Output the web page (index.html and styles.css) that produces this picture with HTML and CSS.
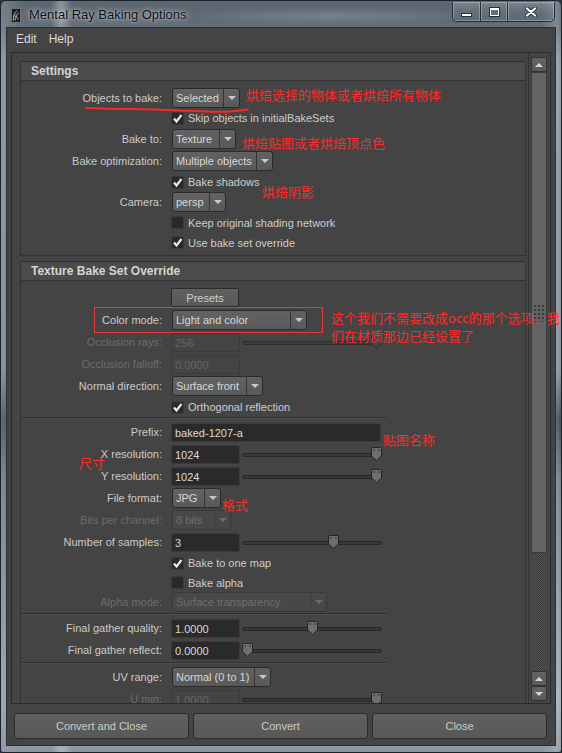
FILE: index.html
```html
<!DOCTYPE html>
<html>
<head>
<meta charset="utf-8">
<title>Mental Ray Baking Options</title>
<link rel="stylesheet" href="styles.css">
</head>
<body>
<div class="window">
  <div class="titlebar">
    <svg class="appicon" width="10" height="15" viewBox="0 0 10 15">
      <rect x="0.5" y="0.5" width="9" height="14" rx="1" fill="#1c1c1c" stroke="#6d747a"/>
      <path d="M2.5 12.5 C2 9 3 5 6 2.5 M4 12.5 C4.5 9 6 6.5 7.5 4.5 M3 8 C5 7.5 6.5 9 7 11.5" stroke="#d8d8d8" stroke-width="0.8" fill="none"/>
    </svg>
    <span class="title">Mental Ray Baking Options</span>
    <div class="caption-btns">
      <div class="cbtn cbtn-min"><span class="min-glyph"></span></div>
      <div class="cbtn cbtn-max"><span class="max-glyph"></span></div>
      <div class="cbtn cbtn-close">
        <svg width="12" height="10" viewBox="0 0 12 10">
          <path d="M2 1.5 L10 8.5 M10 1.5 L2 8.5" stroke="#2a3038" stroke-width="4" stroke-linecap="round"/>
          <path d="M2 1.5 L10 8.5 M10 1.5 L2 8.5" stroke="#ffffff" stroke-width="2.2" stroke-linecap="round"/>
        </svg>
      </div>
    </div>
  </div>

  <div class="client">
    <div class="menubar"><span>Edit</span><span>Help</span></div>

    <div class="scrollarea">
      <div class="viewport">
        <div class="section">
          <div class="sec-head">Settings</div>
          <div class="sec-body">
            <div class="row r20"><span class="lbl">Objects to bake:</span><div class="dd w68"><span class="dd-val">Selected</span><span class="dd-arr"></span></div></div>
            <div class="row r20"><span class="lbl"></span><span class="cb on"><svg viewBox="0 0 11 11"><polyline points="2,5.5 4.5,8.5 9.5,2" /></svg></span><span class="cb-text">Skip objects in initialBakeSets</span></div>
            <div class="row r22"><span class="lbl">Bake to:</span><div class="dd w64"><span class="dd-val">Texture</span><span class="dd-arr"></span></div></div>
            <div class="row r22"><span class="lbl">Bake optimization:</span><div class="dd w101"><span class="dd-val">Multiple objects</span><span class="dd-arr"></span></div></div>
            <div class="row r20"><span class="lbl"></span><span class="cb on"><svg viewBox="0 0 11 11"><polyline points="2,5.5 4.5,8.5 9.5,2" /></svg></span><span class="cb-text">Bake shadows</span></div>
            <div class="row r20"><span class="lbl">Camera:</span><div class="dd w54"><span class="dd-val">persp</span><span class="dd-arr"></span></div></div>
            <div class="row r21"><span class="lbl"></span><span class="cb"></span><span class="cb-text">Keep original shading network</span></div>
            <div class="row r19"><span class="lbl"></span><span class="cb on"><svg viewBox="0 0 11 11"><polyline points="2,5.5 4.5,8.5 9.5,2" /></svg></span><span class="cb-text">Use bake set override</span></div>
          </div>
        </div>

        <div class="section sec2">
          <div class="sec-head">Texture Bake Set Override</div>
          <div class="sec-body tight">
            <div class="row r23"><span class="lbl"></span><span class="btn presets">Presets</span></div>
            <div class="row"><span class="lbl">Color mode:</span><div class="dd w135"><span class="dd-val">Light and color</span><span class="dd-arr"></span></div></div>
            <div class="row"><span class="lbl dis">Occlusion rays:</span><span class="fld dis">256</span><div class="slider"><div class="track dis"></div><svg class="knob dis" style="left:129px" viewBox="0 0 11 14"><path d="M1.5 .5h8a1 1 0 0 1 1 1v7.5l-5 4.5-5-4.5v-7.5a1 1 0 0 1 1-1z"/></svg></div></div>
            <div class="row"><span class="lbl dis">Occlusion falloff:</span><span class="fld dis">0.0000</span></div>
            <div class="row"><span class="lbl">Normal direction:</span><div class="dd w91"><span class="dd-val">Surface front</span><span class="dd-arr"></span></div></div>
            <div class="row r20"><span class="lbl"></span><span class="cb on"><svg viewBox="0 0 11 11"><polyline points="2,5.5 4.5,8.5 9.5,2" /></svg></span><span class="cb-text">Orthogonal reflection</span></div>
            <div class="sep first"></div>
            <div class="row"><span class="lbl">Prefix:</span><span class="fld w210">baked-1207-a</span></div>
            <div class="row"><span class="lbl">X resolution:</span><span class="fld">1024</span><div class="slider"><div class="track"></div><svg class="knob" style="left:129px" viewBox="0 0 11 14"><path d="M1.5 .5h8a1 1 0 0 1 1 1v7.5l-5 4.5-5-4.5v-7.5a1 1 0 0 1 1-1z"/><rect class="notch" x="2.5" y="2" width="1" height="2"/><rect class="notch" x="7.5" y="2" width="1" height="2"/></svg></div></div>
            <div class="row"><span class="lbl">Y resolution:</span><span class="fld">1024</span><div class="slider"><div class="track"></div><svg class="knob" style="left:129px" viewBox="0 0 11 14"><path d="M1.5 .5h8a1 1 0 0 1 1 1v7.5l-5 4.5-5-4.5v-7.5a1 1 0 0 1 1-1z"/><rect class="notch" x="2.5" y="2" width="1" height="2"/><rect class="notch" x="7.5" y="2" width="1" height="2"/></svg></div></div>
            <div class="row"><span class="lbl">File format:</span><div class="dd w49"><span class="dd-val">JPG</span><span class="dd-arr"></span></div></div>
            <div class="row"><span class="lbl dis">Bits per channel:</span><div class="dd dis w59"><span class="dd-val">8 bits</span><span class="dd-arr"></span></div></div>
            <div class="row"><span class="lbl">Number of samples:</span><span class="fld">3</span><div class="slider"><div class="track"></div><svg class="knob" style="left:86px" viewBox="0 0 11 14"><path d="M1.5 .5h8a1 1 0 0 1 1 1v7.5l-5 4.5-5-4.5v-7.5a1 1 0 0 1 1-1z"/><rect class="notch" x="2.5" y="2" width="1" height="2"/><rect class="notch" x="7.5" y="2" width="1" height="2"/></svg></div></div>
            <div class="row r20"><span class="lbl"></span><span class="cb on"><svg viewBox="0 0 11 11"><polyline points="2,5.5 4.5,8.5 9.5,2" /></svg></span><span class="cb-text">Bake to one map</span></div>
            <div class="row r19"><span class="lbl"></span><span class="cb"></span><span class="cb-text">Bake alpha</span></div>
            <div class="row r20"><span class="lbl dis">Alpha mode:</span><div class="dd dis w155"><span class="dd-val">Surface transparency</span><span class="dd-arr"></span></div></div>
            <div class="sep"></div>
            <div class="row gap1"><span class="lbl">Final gather quality:</span><span class="fld">1.0000</span><div class="slider"><div class="track"></div><svg class="knob" style="left:65px" viewBox="0 0 11 14"><path d="M1.5 .5h8a1 1 0 0 1 1 1v7.5l-5 4.5-5-4.5v-7.5a1 1 0 0 1 1-1z"/><rect class="notch" x="2.5" y="2" width="1" height="2"/><rect class="notch" x="7.5" y="2" width="1" height="2"/></svg></div></div>
            <div class="row"><span class="lbl">Final gather reflect:</span><span class="fld">0.0000</span><div class="slider"><div class="track"></div><svg class="knob" style="left:0px" viewBox="0 0 11 14"><path d="M1.5 .5h8a1 1 0 0 1 1 1v7.5l-5 4.5-5-4.5v-7.5a1 1 0 0 1 1-1z"/><rect class="notch" x="2.5" y="2" width="1" height="2"/><rect class="notch" x="7.5" y="2" width="1" height="2"/></svg></div></div>
            <div class="sep"></div>
            <div class="row"><span class="lbl">UV range:</span><div class="dd w99"><span class="dd-val">Normal (0 to 1)</span><span class="dd-arr"></span></div></div>
            <div class="row"><span class="lbl dis">U min:</span><span class="fld dis">1.0000</span><div class="slider"><div class="track"></div><svg class="knob" style="left:129px" viewBox="0 0 11 14"><path d="M1.5 .5h8a1 1 0 0 1 1 1v7.5l-5 4.5-5-4.5v-7.5a1 1 0 0 1 1-1z"/><rect class="notch" x="2.5" y="2" width="1" height="2"/><rect class="notch" x="7.5" y="2" width="1" height="2"/></svg></div></div>
          </div>
        </div>
      </div>

      <div class="scrollbar">
        <div class="sb-btn up"></div>
        <div class="sb-thumb"><div class="sb-grip"></div></div>
        <div class="sb-track"></div>
        <div class="sb-btn up"></div>
        <div class="sb-btn down"></div>
      </div>
    </div>

    <div class="actions">
      <div class="btn action">Convert and Close</div>
      <div class="btn action">Convert</div>
      <div class="btn action">Close</div>
    </div>
  </div>

  <svg class="underline" width="166" height="10" viewBox="0 0 166 10">
    <path d="M1 3 C 12 2.5, 22 4.5, 40 4 S 90 5.5, 120 6.5 S 150 6, 163 4.5" stroke="#ff2626" stroke-width="2" fill="none" stroke-linecap="round"/>
  </svg>
  <div class="redbox"></div>

  <div class="note n1">烘焙选择的物体或者烘焙所有物体</div>
  <div class="note n2">烘焙贴图或者烘焙顶点色</div>
  <div class="note n3">烘焙阴影</div>
  <div class="note n4">这个我们不需要改成occ的那个选项，我<br>们在材质那边已经设置了</div>
  <div class="note n5">贴图名称</div>
  <div class="note n6">尺寸</div>
  <div class="note n7">格式</div>
</div>
</body>
</html>
```

FILE: styles.css
```css
html, body {
  margin: 0;
  padding: 0;
}
body {
  background: #2c333b;
  font-family: "Liberation Sans", Arial, sans-serif;
  font-size: 11px;
}

.window {
  position: relative;
  width: 562px;
  height: 753px;
  box-sizing: border-box;
  border: 1px solid #1d232a;
  border-radius: 6px 6px 3px 3px;
  padding: 0 6px 7px 6px;
  display: flex;
  flex-direction: column;
  overflow: hidden;
  background:
    linear-gradient(90deg, rgba(255,255,255,0) 50px, rgba(230,236,240,0.35) 60px, rgba(255,255,255,0) 72px),
    radial-gradient(ellipse 150px 9px at 330px 15px, rgba(205,210,215,0.22), rgba(205,210,215,0) 100%),
    linear-gradient(90deg, rgba(150,160,170,0.45) 0, rgba(0,0,0,0) 24px, rgba(0,0,0,0) 540px, rgba(200,210,220,0.3) 556px, rgba(0,0,0,0) 562px),
    linear-gradient(180deg, #5b6570 0, #636d77 27px, #8a939c 60px, #7f8891 370px, #2f3b46 420px, #6d7781 480px, #8b949c 600px, #a3abb2 700px, #8b949c 753px);
}

/* ---------- title bar ---------- */
.titlebar {
  height: 27px;
  display: flex;
  align-items: flex-start;
}
.appicon {
  margin: 7px 0 0 4px;
  flex: none;
}
.title {
  margin-left: 8px;
  line-height: 28px;
  font-size: 13px;
  color: #0b0e14;
  text-shadow: 0 0 6px rgba(255,255,255,0.75), 0 0 2px rgba(255,255,255,0.5);
}
.caption-btns {
  margin-left: auto;
  margin-top: 1px;
  display: flex;
  height: 19px;
  border: 1px solid rgba(28,35,43,0.9);
  border-top: 0;
  border-radius: 0 0 5px 5px;
  overflow: hidden;
  background: linear-gradient(180deg, rgba(180,188,196,0.35), rgba(120,130,140,0.25) 50%, rgba(90,100,110,0.3));
}
.cbtn {
  display: flex;
  align-items: center;
  justify-content: center;
  box-shadow: inset 0 0 0 1px rgba(255,255,255,0.28);
}
.cbtn + .cbtn {
  border-left: 1px solid rgba(28,35,43,0.9);
}
.cbtn-min { width: 27px; }
.cbtn-max { width: 26px; }
.cbtn-close { width: 46px; }
.min-glyph {
  width: 9px;
  height: 2px;
  margin-top: 6px;
  background: #fff;
  border: 1px solid #2a3038;
}
.max-glyph {
  width: 7px;
  height: 5px;
  border: 1px solid #fff;
  border-top-width: 2px;
  outline: 1px solid #2a3038;
}

/* ---------- client ---------- */
.client {
  flex: 1;
  background: #444444;
  box-shadow: 0 0 0 1px #2a2f35;
  display: flex;
  flex-direction: column;
  color: #c9c9c9;
}
.menubar {
  height: 22px;
  display: flex;
  gap: 12px;
  padding-left: 9px;
  line-height: 23px;
  font-size: 12px;
  color: #dadada;
}

.scrollarea {
  margin: 2px 4px 0 4px;
  height: 652px;
  box-sizing: border-box;
  border: 1px solid #2c2c2c;
  display: flex;
}
.viewport {
  flex: 1;
  overflow: hidden;
}
.section {
  margin: 8px 0 0 8px;
  width: 506px;
}
.section.sec2 {
  margin-top: 5px;
}
.sec-head {
  height: 20px;
  box-sizing: border-box;
  border: 1px solid #323232;
  border-radius: 2px 2px 0 0;
  background: #4b4b4b;
  padding-left: 10px;
  font-weight: bold;
  font-size: 12px;
  line-height: 18px;
  color: #d4d4d4;
}
.sec-body {
  border: 1px solid #323232;
  border-top: 0;
  padding: 7px 0 3px;
}
.sec-body.tight {
  padding-top: 5px;
}

.row {
  display: flex;
  align-items: center;
  height: 22px;
}
.row.r19 { height: 19px; }
.row.r20 { height: 20px; }
.row.r21 { height: 21px; }
.row.r23 { height: 23px; }
.row.gap1 { margin-top: 1px; }

.lbl {
  flex: 0 0 151px;
  box-sizing: border-box;
  padding-right: 10px;
  text-align: right;
  color: #cbcbcb;
  white-space: nowrap;
}
.lbl.dis { color: #6c6c6c; }

/* dropdown */
.dd {
  display: flex;
  height: 20px;
  box-sizing: border-box;
  border: 1px solid #2a2a2a;
  border-radius: 3px;
  background: linear-gradient(180deg, #626262, #595959);
  color: #d8d8d8;
}
.dd-val {
  flex: 1;
  padding-left: 3px;
  line-height: 18px;
  white-space: nowrap;
  overflow: hidden;
}
.dd-arr {
  flex: 0 0 15px;
  border-left: 1px solid #343434;
  display: flex;
  align-items: center;
  justify-content: center;
}
.dd-arr::after {
  content: "";
  width: 0;
  height: 0;
  border-left: 4px solid transparent;
  border-right: 4px solid transparent;
  border-top: 4px solid #c9c9c9;
}
.dd.dis {
  background: #484848;
  border-color: #393939;
  color: #6e6e6e;
}
.dd.dis .dd-arr { border-left-color: #3a3a3a; }
.dd.dis .dd-arr::after { border-top-color: #6e6e6e; }

.w49 { width: 49px; }
.w54 { width: 54px; }
.w59 { width: 59px; }
.w64 { width: 64px; }
.w68 { width: 68px; }
.w91 { width: 91px; }
.w99 { width: 99px; }
.w101 { width: 101px; }
.w135 { width: 135px; }
.w155 { width: 155px; }

/* checkbox */
.cb {
  width: 13px;
  height: 13px;
  box-sizing: border-box;
  margin-left: -1px;
  margin-right: 4px;
  background: #2a2a2a;
  border: 1px solid #3a3a3a;
  border-radius: 2px;
  display: flex;
}
.cb svg {
  width: 11px;
  height: 11px;
}
.cb polyline {
  fill: none;
  stroke: #ececec;
  stroke-width: 2.1;
}
.cb-text {
  color: #cdcdcd;
  white-space: nowrap;
}

/* text field */
.fld {
  width: 69px;
  height: 19px;
  box-sizing: border-box;
  margin-left: -1px;
  padding-left: 3px;
  background: #2a2a2a;
  border: 1px solid #3a3a3a;
  border-radius: 2px;
  color: #dadada;
  line-height: 18px;
}
.fld.w210 { width: 210px; }
.fld.dis {
  background: transparent;
  border-color: #3b3b3b;
  color: #666666;
}

/* slider */
.slider {
  position: relative;
  width: 140px;
  height: 19px;
  margin-left: 2px;
}
.track {
  position: absolute;
  left: 0;
  right: 0;
  top: 8px;
  height: 4px;
  box-sizing: border-box;
  background: #383838;
  border: 1px solid #272727;
  border-radius: 2px;
}
.track.dis {
  background: #3c3c3c;
  border-color: #2e2e2e;
}
.knob {
  position: absolute;
  top: 2px;
  width: 11px;
  height: 14px;
}
.knob path {
  fill: #6e6e6e;
  stroke: #242424;
  stroke-width: 1;
}
.knob .notch { fill: #2b2b2b; }
.knob.dis path {
  fill: #444444;
  stroke: #303030;
}

.sep {
  width: 366px;
  height: 0;
  border-top: 1px solid #2f2f2f;
  border-bottom: 1px solid #4e4e4e;
  margin: 1px 0 2px;
}
.sep.first { margin-top: 0; }

/* buttons */
.btn {
  display: flex;
  align-items: center;
  justify-content: center;
  box-sizing: border-box;
  background: linear-gradient(180deg, #606060, #585858);
  border: 1px solid #2b2b2b;
  border-radius: 3px;
  color: #d0d0d0;
  white-space: nowrap;
}
.btn.presets {
  width: 68px;
  height: 19px;
  margin-left: -1px;
  border-radius: 2px;
}
.actions {
  display: flex;
  gap: 4px;
  margin: 9px 8px 0 7px;
  height: 26px;
}
.btn.action {
  flex: 1;
  height: 26px;
  color: #cbcbcb;
}

/* scrollbar */
.scrollbar {
  width: 22px;
  box-sizing: border-box;
  border-left: 1px solid #333333;
  padding: 4px 3px 2px 2px;
  display: flex;
  flex-direction: column;
}
.sb-btn {
  height: 15px;
  box-sizing: border-box;
  background: linear-gradient(180deg, #646464, #5a5a5a);
  border: 1px solid #333333;
  border-radius: 2px;
  display: flex;
  align-items: center;
  justify-content: center;
}
.sb-btn::after {
  content: "";
  width: 0;
  height: 0;
  border-left: 4px solid transparent;
  border-right: 4px solid transparent;
}
.sb-btn.up::after { border-bottom: 4px solid #d6d6d6; }
.sb-btn.down::after { border-top: 4px solid #d6d6d6; }
.sb-thumb {
  height: 481px;
  box-sizing: border-box;
  background: #636363;
  border: 1px solid #3a3a3a;
  border-radius: 1px;
  display: flex;
  align-items: center;
  justify-content: center;
}
.sb-grip {
  width: 12px;
  height: 18px;
  background: radial-gradient(circle, #3a3a3a 1px, rgba(0,0,0,0) 1.3px) 0 0 / 4px 4px;
}
.sb-track {
  flex: 1;
  background: repeating-conic-gradient(#525252 0 25%, #3d3d3d 0 50%) 0 0 / 2px 2px;
}

/* annotations */
.underline {
  position: absolute;
  left: 84px;
  top: 104px;
}
.redbox {
  position: absolute;
  left: 93px;
  top: 306px;
  width: 229px;
  height: 26px;
  box-sizing: border-box;
  border: 1px solid #e33a3a;
}
.note {
  position: absolute;
  font-family: "Noto Sans CJK SC", "Liberation Sans", sans-serif;
  font-size: 13px;
  line-height: 13px;
  color: #ff2a2a;
  white-space: nowrap;
}
.n1 { left: 245px; top: 87px; }
.n2 { left: 241px; top: 135px; }
.n3 { left: 261px; top: 184px; }
.n4 { left: 330px; top: 308px; line-height: 18px; }
.n5 { left: 382px; top: 432px; }
.n6 { left: 78px; top: 455px; }
.n7 { left: 221px; top: 497px; }
```
